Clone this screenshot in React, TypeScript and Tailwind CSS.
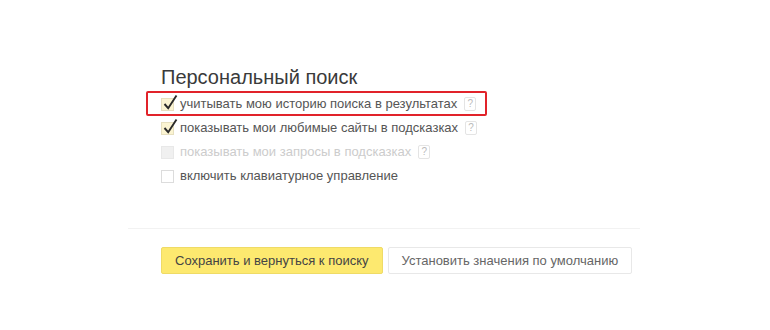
import React from 'react'

type Option = {
  label: string
  state: 'checked' | 'unchecked' | 'disabled'
  hint?: boolean
  marked?: boolean
}

const options: Option[] = [
  { label: 'учитывать мою историю поиска в результатах', state: 'checked', hint: true, marked: true },
  { label: 'показывать мои любимые сайты в подсказках', state: 'checked', hint: true },
  { label: 'показывать мои запросы в подсказках', state: 'disabled', hint: true },
  { label: 'включить клавиатурное управление', state: 'unchecked' },
]

const Checkbox = ({ state }: { state: Option['state'] }) => {
  if (state === 'disabled') {
    return <span className="block w-[13px] h-[13px] bg-[#f0f0f0] border border-[#e8e8e8]" />
  }
  return (
    <span
      className={
        state === 'checked'
          ? 'relative block w-[13px] h-[13px] bg-[#fbf4d2] border border-[#e6dfbf]'
          : 'relative block w-[13px] h-[13px] bg-white border border-[#dcdcdc]'
      }
    >
      {state === 'checked' && (
        <svg className="absolute left-[1px] -top-[5px]" width="15" height="17" viewBox="0 0 15 17" fill="none">
          <path d="M1.5 10 L5.2 14.2 L13.5 1.5" stroke="#2a2a2a" strokeWidth="1.9" />
        </svg>
      )}
    </span>
  )
}

const Hint = () => (
  <span className="ml-[7px] flex items-center justify-center w-[12px] h-[14px] border border-[#e4e4e4] rounded-[2px] text-[10px] leading-none text-[#bbb]">
    ?
  </span>
)

export default function App() {
  return (
    <div className="w-[770px] h-[330px] bg-white font-['Liberation_Sans',Arial,sans-serif] overflow-hidden">
      <div className="ml-[128px] w-[512px] pt-[65px]">
        <div className="pl-[33px]">
          <h2 className="text-[20px] leading-[24px] text-[#3a3a3a]">Персональный поиск</h2>
          <div className="mt-[3px]">
            {options.map(op => (
              <div key={op.label} className="relative flex items-center h-[24px]">
                {op.marked && (
                  <span className="absolute -left-[15px] -top-[1px] w-[341px] h-[25px] border-2 border-[#e1232a] rounded-[2px]" />
                )}
                <Checkbox state={op.state} />
                <span
                  className={
                    op.state === 'disabled'
                      ? 'ml-[6px] text-[13px] text-[#cccccc]'
                      : 'ml-[6px] text-[13px] text-[#555]'
                  }
                >
                  {op.label}
                </span>
                {op.hint && <Hint />}
              </div>
            ))}
          </div>
        </div>
        <div className="mt-[40px] border-t border-[#f2f2f2]" />
        <div className="pl-[33px] pt-[18px] flex gap-[5px]">
          <button
            type="button"
            className="h-[27px] px-[13px] bg-[#fde96f] border border-[#efdb66] rounded-[2px] text-[13px] text-[#444]"
          >
            Сохранить и вернуться к поиску
          </button>
          <button
            type="button"
            className="h-[27px] px-[13px] bg-white border border-[#e8e8e8] rounded-[2px] text-[13px] text-[#666]"
          >
            Установить значения по умолчанию
          </button>
        </div>
      </div>
    </div>
  )
}
